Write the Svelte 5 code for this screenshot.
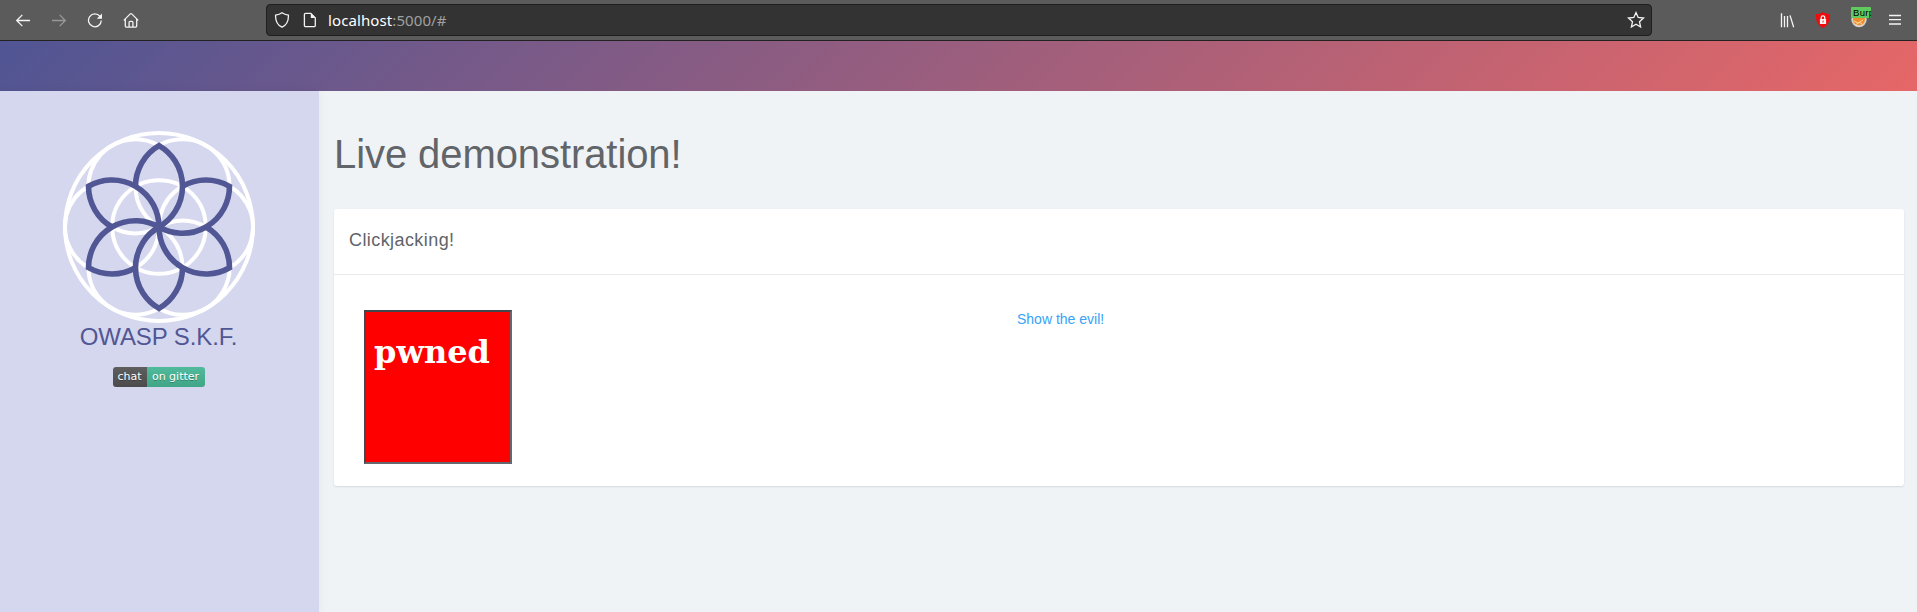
<script>
  const turns = [0, 60, 120, 180, 240, 300];
</script>

<div class="browser">
  <div class="nav">
    <svg width="16" height="16" viewBox="0 0 16 16"><path d="M15 8.500H1.800M7.300 2.900L1.700 8.500l5.600 5.600" /></svg>
    <svg class="dim" width="16" height="16" viewBox="0 0 16 16"><path d="M1 8.500h13.200M8.700 2.900l5.600 5.600-5.600 5.600" /></svg>
    <svg width="16" height="16" viewBox="0 0 16 16"><path d="M13 4.500A6.400 6.400 0 1 0 14.300 8.600" /><path class="solid" d="M15 1.500v5.200H9.800z" /></svg>
    <svg width="16" height="16" viewBox="0 0 16 16"><path d="M.8 8.400L7 2.100q1-1 2 0l6.200 6.300M2.300 7v7c0 .7.400 1.100 1.100 1.100h9.200c.7 0 1.100-.4 1.100-1.100V7M6.100 15v-4.700c0-.6.4-1 1-1h1.800c.6 0 1 .4 1 1V15" /></svg>
  </div>
  <div class="address">
    <svg width="16" height="16" viewBox="0 0 16 16"><path d="M8 .8c1.600 1.200 3.600 2 6.400 2.300.3 5.600-1.600 9.800-6.400 12.100C3.200 12.900 1.300 8.700 1.600 3.100 4.400 2.800 6.400 2 8 .8z" /></svg>
    <svg class="page" width="16" height="16" viewBox="0 0 16 16"><path d="M3.600 1.400h5.200l4.500 4.500v7.500c0 .7-.5 1.200-1.200 1.200H3.600c-.7 0-1.200-.5-1.200-1.200V2.600c0-.7.5-1.200 1.200-1.200z" /><path class="solid" d="M8.800 1v4.900h4.900z" /></svg>
    <span class="url">localhost<span>:5000/#</span></span>
    <svg class="star" width="18" height="18" viewBox="0 0 18 18"><path d="M9 1.600l2.200 4.900 5.300.6-4 3.600 1.100 5.300L9 13.300 4.400 16l1.100-5.300-4-3.600 5.300-.6z" /></svg>
  </div>
  <div class="tools">
    <svg width="16" height="16" viewBox="0 0 16 16"><path d="M2.500 1.200v14M5.500 4v11.200M8.500 4v11.200M11 3.400l3.700 11.800" /></svg>
    <svg width="16" height="16" viewBox="0 0 16 16"><path class="red" d="M8 0c2 1.500 4.500 2 7 2 .5 6-1.500 11.500-7 14C2.500 13.500.500 8 1 2c2.500 0 5-.5 7-2z" /><path class="solid" d="M4.900 7h6.200v5H4.900z" /><path d="M6.200 7V5.600a1.800 1.800 0 0 1 3.600 0V7" /><path class="red" d="M7.600 8.600h.9v1.800h-.9z" /></svg>
    <div class="ext">
      <svg width="16" height="16" viewBox="0 0 16 16"><circle cx="8" cy="7.500" r="7.700" fill="#d9d2c8" stroke="none" /><circle cx="8" cy="7.300" r="6" fill="#f08b2c" stroke="none" /><path d="M3 9l4 2 5-3M5 12.500l3-2 3 1" stroke="#ffd79a" stroke-width="1" /></svg>
      <span class="tag">Burp</span>
    </div>
    <svg width="16" height="16" viewBox="0 0 16 16"><path d="M2 3.500h12M2 7.700h12M2 12h12" /></svg>
  </div>
</div>

<header></header>

<div class="layout">
  <aside>
    <svg class="logo" width="194" height="194" viewBox="-97 -97 194 194">
      <g class="rings">
        <circle r="94" />
        <circle r="46.800" />
        {#each turns as t}
          <circle cx="23.500" cy="-40.700" r="47" transform="rotate({t})" />
        {/each}
      </g>
      <g class="petals">
        {#each turns as t}
          <path d="M-23.500-40.700A47 47 0 0 1 0-81.400A47 47 0 0 1 0 0" transform="rotate({t})" />
        {/each}
      </g>
    </svg>
    <div class="name">OWASP S.K.F.</div>
    <div class="badge"><span>chat</span><span class="on">on gitter</span></div>
  </aside>

  <main>
    <h1>Live demonstration!</h1>
    <section class="card">
      <h2>Clickjacking!</h2>
      <div class="content">
        <div class="frame"><strong>pwned</strong></div>
        <a href="#top">Show the evil!</a>
      </div>
    </section>
  </main>
</div>

<style>
  :global(body) {
    margin: 0;
    background: #eff3f6;
    overflow: hidden;
    font-family: "Liberation Sans", Arial, sans-serif;
    color: #616468;
  }
  * { box-sizing: border-box; }
  svg { display: block; flex: none; fill: none; stroke: #f4f4f4; stroke-width: 1.300; }
  .solid { fill: #f4f4f4; stroke: none; }
  .red { fill: #ee0c0c; stroke: none; }
  .browser {
    display: flex;
    align-items: flex-start;
    height: 41px;
    background: #5b5b5b;
    border-bottom: 1px solid #222;
  }
  .nav { display: flex; gap: 20px; padding: 12px 0 0 15px; width: 266px; }
  .nav .dim { opacity: .4; }
  .address {
    display: flex;
    align-items: center;
    width: 1386px;
    height: 32px;
    margin-top: 4px;
    padding: 0 6px 0 7px;
    background: #333;
    border: 1px solid #1f1f1f;
    border-radius: 4px;
  }
  .page { margin-left: 12px; }
  .url { margin-left: 10px; font: 15px/20px "Noto Sans", sans-serif; color: #fff; letter-spacing: .1px; }
  .url span { color: #a0a0a0; }
  .star { margin-left: auto; }
  .tools { display: flex; gap: 20px; padding: 12px 0 0 127px; }
  .ext { position: relative; width: 16px; height: 16px; }
  .tag {
    position: absolute;
    left: 0;
    top: -5px;
    width: 20px;
    height: 11px;
    padding-left: 2px;
    overflow: hidden;
    background: #5fcb5f;
    border-radius: 1px;
    font: 9.500px/11px "Liberation Sans", sans-serif;
    letter-spacing: .3px;
    color: #000;
  }
  header { height: 50px; background: linear-gradient(135deg, #505594, #e66767); }
  .layout { display: flex; height: 521px; }
  aside {
    display: flex;
    flex-direction: column;
    align-items: center;
    width: 319px;
    padding: 39px 2px 0 0;
    background: #d5d7ee;
    box-shadow: 0 0 10px rgba(0, 0, 0, .06);
  }
  .rings { stroke: #fff; stroke-width: 4; }
  .petals { stroke: #515694; stroke-width: 5.600; stroke-linejoin: miter; }
  .name { margin-top: -1px; font-size: 24px; line-height: 28px; letter-spacing: -.1px; color: #515694; }
  .badge {
    display: flex;
    width: 92px;
    height: 20px;
    margin-top: 16px;
    overflow: hidden;
    border-radius: 3px;
    font: 11px/20px "DejaVu Sans", sans-serif;
    color: #fff;
    text-align: center;
    text-shadow: 0 1px rgba(1, 1, 1, .3);
  }
  .badge span { width: 34px; background: linear-gradient(#5e5e5e, #4b4b4b); }
  .badge .on { width: 58px; background: linear-gradient(#50bb9b, #41a587); }
  main { flex: 1; padding: 39px 13px 0 15px; }
  h1 { margin: 0; font-size: 40px; line-height: 48px; font-weight: 400; letter-spacing: -.08px; }
  .card {
    height: 277px;
    margin-top: 31px;
    background: #fff;
    border-radius: 3px;
    box-shadow: 0 1px 2px rgba(0, 0, 0, .1);
  }
  h2 {
    height: 66px;
    margin: 0;
    padding: 19px 15px;
    border-bottom: 1px solid #e9eaeb;
    font-size: 18px;
    line-height: 24px;
    font-weight: 400;
    letter-spacing: .42px;
  }
  .content { display: grid; grid-template-columns: 653px 1fr; padding: 35px 30px; }
  .frame {
    width: 148px;
    height: 154px;
    padding: 21px 8px;
    background: #f00;
    border: 2px solid;
    border-color: #43474b #65686c #65686c #43474b;
    color: #fff;
    font: 32px/38px "DejaVu Serif", serif;
  }
  a { margin-top: -1px; font-size: 14px; line-height: 20px; color: #36a3f7; text-decoration: none; }
</style>
